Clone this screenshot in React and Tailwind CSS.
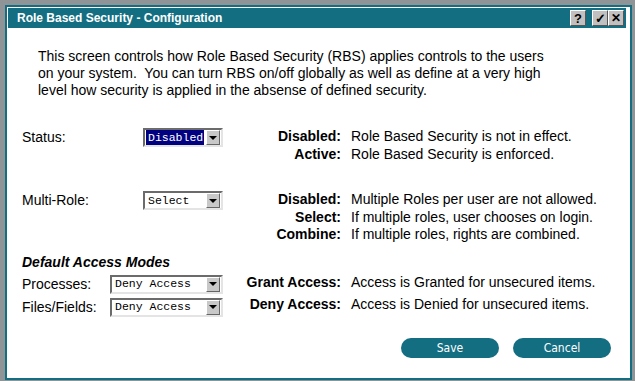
import React from "react";

const sans = "font-['Liberation_Sans',Arial,sans-serif]";
const mono = "font-['Liberation_Mono','Courier_New',monospace]";

function TitleButton({ children }) {
  return (
    <div className="w-[16px] h-[16px] bg-[#c0c0c0] border border-t-white border-l-white border-r-[#555] border-b-[#555] flex items-center justify-center text-black text-[13px] font-bold leading-none">
      {children}
    </div>
  );
}

function Select({ value, width, selected }) {
  return (
    <div
      className={`h-[19px] ${width} bg-white border-2 border-t-[#6b6b6b] border-l-[#6b6b6b] border-r-[#e4e4e4] border-b-[#e4e4e4] flex items-center pl-[1px] pr-[1px]`}
    >
      <div
        className={`flex-1 h-[15px] flex items-center pl-[2px] ${mono} text-[11.5px] ${
          selected ? "bg-[#000080] text-white mr-[2px]" : "text-black"
        }`}
      >
        {value}
      </div>
      <div className="w-[14px] h-[15px] bg-[#c8c8c8] border border-t-white border-l-white border-r-[#666] border-b-[#666] flex items-center justify-center">
        <div className="w-0 h-0 border-l-[4px] border-r-[4px] border-t-[4px] border-l-transparent border-r-transparent border-t-black" />
      </div>
    </div>
  );
}

function Legend({ rows }) {
  return (
    <div className="grid grid-cols-[101px_auto] gap-x-[10px] leading-[17.5px] text-[14px] text-black">
      {rows.map(([k, v]) => (
        <React.Fragment key={k}>
          <div className="text-right font-bold whitespace-nowrap">{k}</div>
          <div className="whitespace-nowrap">{v}</div>
        </React.Fragment>
      ))}
    </div>
  );
}

export default function App() {
  return (
    <div className={`w-[635px] h-[381px] bg-[#8f9596] pt-[5px] pl-[5px] ${sans}`}>
      <div className="w-[627px] h-[375px] border-2 border-[#146e82] bg-white flex flex-col">
        {/* Title bar */}
        <div className="mt-[1px] ml-[1px] mr-[4px] h-[20px] bg-[#146e82] flex items-center pl-[9px] pr-[2px]">
          <div className="flex-1 text-white font-bold text-[12px]">
            Role Based Security - Configuration
          </div>
          <TitleButton>?</TitleButton>
          <div className="w-[6px]" />
          <TitleButton>✓</TitleButton>
          <TitleButton>
            <span className="text-[12px]">✕</span>
          </TitleButton>
        </div>

        {/* Intro */}
        <p className="mt-[20px] ml-[31px] text-[14px] leading-[17px] text-black whitespace-nowrap">
          This screen controls how Role Based Security (RBS) applies controls to the users
          <br />
          on your system.&nbsp; You can turn RBS on/off globally as well as define at a very high
          <br />
          level how security is applied in the absense of defined security.
        </p>

        <div className="ml-[15px] flex flex-col">
          {/* Status */}
          <div className="mt-[29px] flex">
            <div className="w-[218px] flex items-start">
              <div className="w-[121px] text-[14px] leading-[19px]">Status:</div>
              <Select value="Disabled" width="w-[80px]" selected />
            </div>
            <Legend
              rows={[
                ["Disabled:", "Role Based Security is not in effect."],
                ["Active:", "Role Based Security is enforced."],
              ]}
            />
          </div>

          {/* Multi-Role */}
          <div className="mt-[28px] flex">
            <div className="w-[218px] flex items-start">
              <div className="w-[121px] text-[14px] leading-[19px]">Multi-Role:</div>
              <Select value="Select" width="w-[80px]" />
            </div>
            <Legend
              rows={[
                ["Disabled:", "Multiple Roles per user are not allowed."],
                ["Select:", "If multiple roles, user chooses on login."],
                ["Combine:", "If multiple roles, rights are combined."],
              ]}
            />
          </div>

          {/* Default Access Modes */}
          <div className="mt-[10px] text-[14px] font-bold italic leading-[17px]">
            Default Access Modes
          </div>
          <div className="mt-[3px] flex">
            <div className="w-[218px] flex flex-col gap-[2px]">
              <div className="flex items-center">
                <div className="w-[88px] text-[14px]">Processes:</div>
                <Select value="Deny Access" width="w-[113px]" />
              </div>
              <div className="flex items-center">
                <div className="w-[88px] text-[14px]">Files/Fields:</div>
                <Select value="Deny Access" width="w-[113px]" />
              </div>
            </div>
            <Legend
              rows={[
                ["Grant Access:", "Access is Granted for unsecured items."],
                ["Deny Access:", "Access is Denied for unsecured items."],
              ]}
            />
          </div>
        </div>

        {/* Buttons */}
        <div className="mt-auto mb-[20px] flex justify-end gap-[14px] pr-[19px]">
          {["Save", "Cancel"].map((b) => (
            <button
              key={b}
              className="w-[98px] h-[20px] rounded-full bg-[#146e82] text-white text-[12px] font-['DejaVu_Sans_Condensed','DejaVu_Sans',sans-serif] leading-none"
            >
              {b}
            </button>
          ))}
        </div>
      </div>
    </div>
  );
}
